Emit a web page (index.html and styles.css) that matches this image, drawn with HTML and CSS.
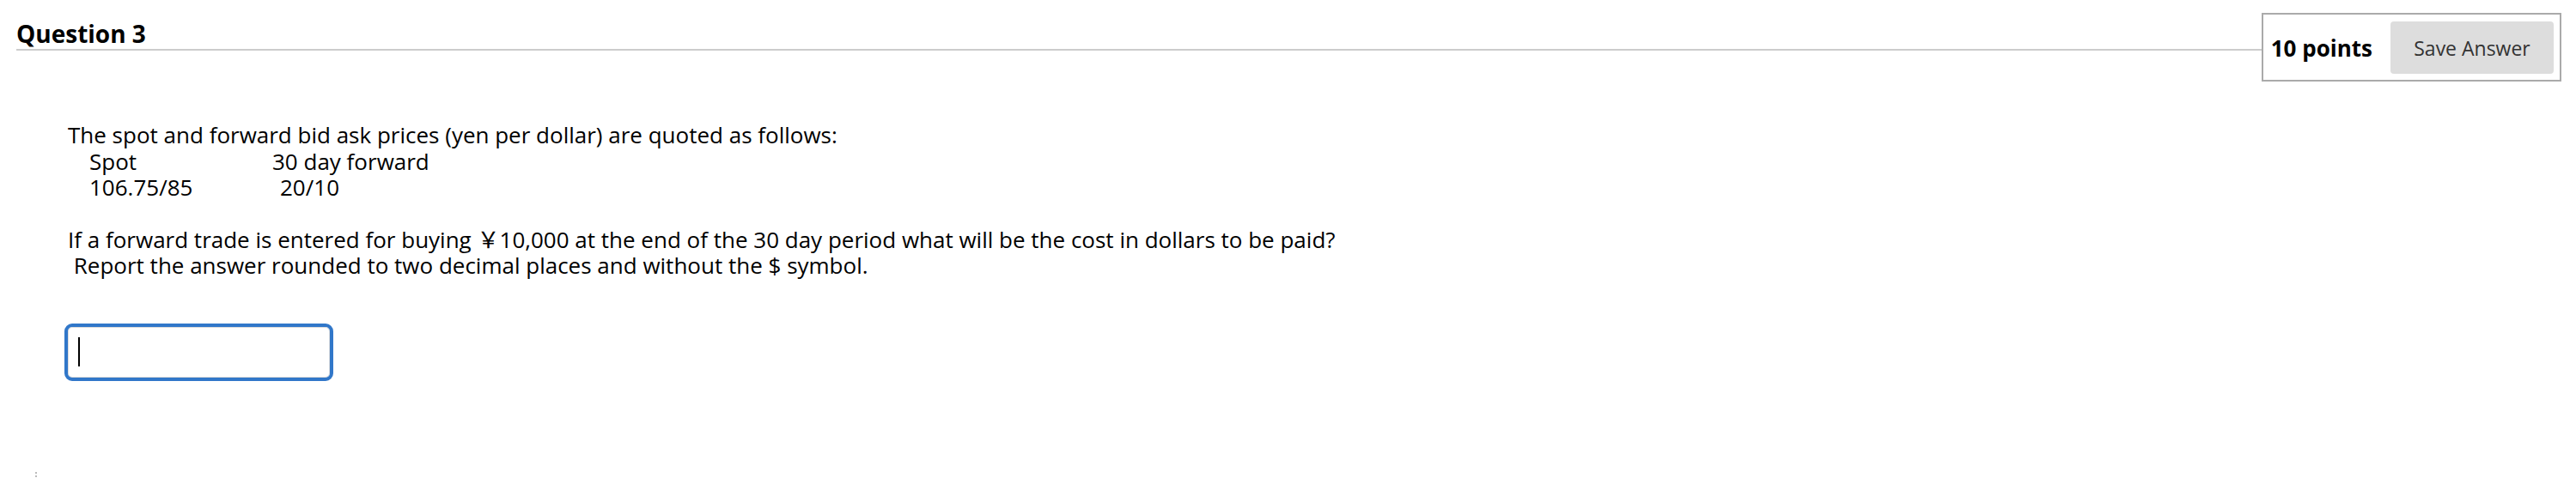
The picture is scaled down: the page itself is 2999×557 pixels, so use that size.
FILE: index.html
```html
<!DOCTYPE html>
<html lang="en">
<head>
<meta charset="utf-8">
<title>Question 3</title>
<link rel="stylesheet" href="styles.css">
</head>
<body>
<div class="page">
  <div class="question-header">
    <h2 class="question-title">Question 3</h2>
    <div class="points-box">
      <span class="points">10 points</span>
      <button class="save-btn" type="button">Save Answer</button>
    </div>
  </div>
  <div class="question-body">
    <div class="prompt">
      <p class="intro">The spot and forward bid ask prices (yen per dollar) are quoted as follows:</p>
      <div class="quote-table">
        <span class="col-a">Spot</span><span class="col-b">30 day forward</span>
        <span class="col-a">106.75/85</span><span class="col-b shift">20/10</span>
      </div>
    </div>
    <p class="task">If a forward trade is entered for buying <span class="yen">￥</span>10,000 at the end of the 30 day period what will be the cost in dollars to be paid?<br><span class="lead">&nbsp;</span>Report the answer rounded to two decimal places and without the $ symbol.</p>
    <div class="answer-input"><span class="caret"></span></div>
  </div>
  <div class="grip"><i></i><i></i></div>
</div>
</body>
</html>
```

FILE: styles.css
```css
html, body {
  margin: 0;
  padding: 0;
  background: #ffffff;
}

body {
  font-family: "Open Sans", "Noto Sans", sans-serif;
  color: #000;
}

.page {
  padding: 0 17px 0 19px;
  position: relative;
  height: 557px;
  box-sizing: border-box;
}

.question-header {
  display: flex;
  align-items: flex-start;
}

.question-title {
  flex: 1;
  margin: 21px 0 0 0;
  height: 36px;
  font-size: 28px;
  line-height: 36px;
  font-weight: 700;
  border-bottom: 2px solid #cccccc;
}

.points-box {
  margin-top: 15px;
  border: 2px solid #aaaaaa;
  padding: 8px 7px 7px 9px;
  display: flex;
  align-items: center;
  gap: 21px;
}

.points {
  font-size: 26px;
  font-weight: 700;
  line-height: 30px;
}

.save-btn {
  width: 190px;
  height: 61px;
  border: none;
  border-radius: 4px;
  background: #dddddd;
  color: #333333;
  font-family: "Open Sans", "Noto Sans", sans-serif;
  font-size: 23px;
  padding: 0;
}

.question-body {
  padding-left: 60px;
  font-size: 26px;
  line-height: 30.5px;
}

.intro {
  margin: 47px 0 0 0;
}

.quote-table {
  display: grid;
  grid-template-columns: 213px auto;
  justify-content: start;
  margin-left: 25px;
}

.shift {
  padding-left: 9px;
}

.task {
  margin: 29px 0 0 0;
}

.yen {
  font-family: "Noto Sans CJK JP", sans-serif;
  font-size: 26px;
}

.answer-input {
  margin-top: 56px;
  width: 292px;
  height: 57px;
  border: 1px solid #dcdcdc;
  border-radius: 5px;
  outline: 4px solid #3177c9;
  box-sizing: content-box;
  display: flex;
  align-items: center;
  padding-left: 11px;
}

.caret {
  display: block;
  width: 2px;
  height: 34px;
  background: #000;
  margin-top: -1px;
}

.grip {
  position: absolute;
  left: 41px;
  top: 550px;
  display: flex;
  flex-direction: column;
  gap: 2px;
}

.grip i {
  display: block;
  width: 2px;
  height: 2px;
  background: #bbbbbb;
}
```
